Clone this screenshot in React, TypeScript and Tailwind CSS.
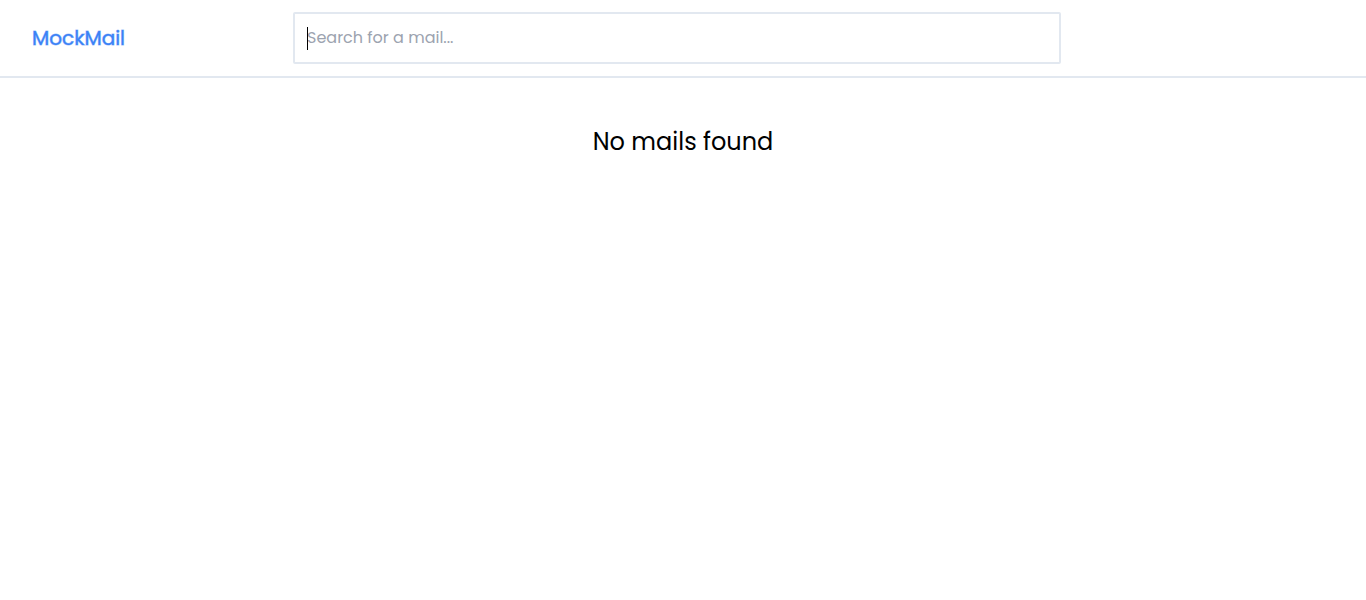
import { useState } from "react";

export default function App() {
  const [query, setQuery] = useState("");

  return (
    <div className="min-h-screen bg-white font-['Poppins','Inter',sans-serif] text-black">
      <header className="flex items-center border-b-2 border-[#e2e8f0] px-8 py-3">
        <div className="w-[261px] shrink-0">
          <a
            href="#"
            className="text-xl font-normal text-[#3b82f6] [-webkit-text-stroke:1px_#3b82f680]"
          >
            MockMail
          </a>
        </div>
        <div className="relative w-full max-w-3xl">
          <input
            type="text"
            aria-label="Search for a mail"
            placeholder="Search for a mail..."
            autoFocus
            value={query}
            onChange={(event) => setQuery(event.target.value)}
            className="block w-full rounded-xs border-2 border-[#e2e8f0] p-3 text-base caret-black outline-none placeholder:text-[#9ca3af] placeholder-shown:caret-transparent"
          />
          {query === "" && (
            <span
              aria-hidden="true"
              className="pointer-events-none absolute top-[15px] bottom-3.5 left-3.5 w-px bg-black"
            />
          )}
        </div>
      </header>
      <main className="px-8 py-12 text-center">
        <p className="text-2xl">No mails found</p>
      </main>
    </div>
  );
}
